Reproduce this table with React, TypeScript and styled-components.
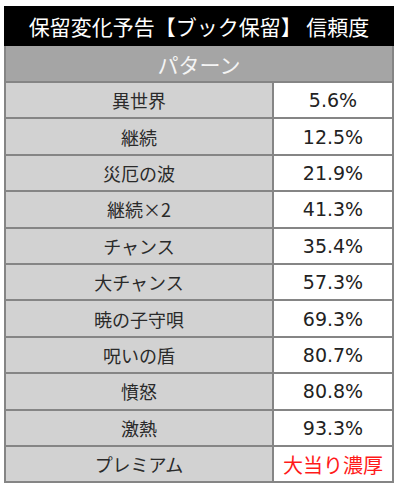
import React from "react";
import styled, { createGlobalStyle } from "styled-components";

const GlobalStyle = createGlobalStyle`
  html, body {
    margin: 0;
    padding: 0;
    background: #ffffff;
  }
`;

const Page = styled.div`
  padding: 6px 6px 0 4px;
`;

const Table = styled.table`
  width: 390px;
  border-collapse: collapse;
  border: 2px solid #858585;
  font-family: "Noto Sans CJK JP", sans-serif;
`;

const TitleCell = styled.th`
  height: 36px;
  padding: 0;
  background: #000000;
  color: #ffffff;
  font-size: 21px;
  font-weight: 400;
  text-align: center;
  border: 2px solid #000000;
`;

const PatternCell = styled.th`
  height: 35px;
  padding: 0;
  background: #a5a5a5;
  color: #f4f4f4;
  font-size: 21px;
  font-weight: 400;
  text-align: center;
  border: 2px solid #858585;
`;

const Row = styled.tr`
  height: 36.4px;
`;

const NameCell = styled.td`
  width: 266px;
  padding: 0;
  background: #d2d2d2;
  color: #2a2a2a;
  font-size: 18px;
  text-align: center;
  border: 2px solid #858585;
`;

const RateCell = styled.td<{ $hot?: boolean }>`
  padding: 0;
  background: #ffffff;
  color: ${(p) => (p.$hot ? "#ff1a1a" : "#222222")};
  font-family: ${(p) =>
    p.$hot ? '"Noto Sans CJK JP", sans-serif' : '"DejaVu Sans", sans-serif'};
  font-size: ${(p) => (p.$hot ? "20px" : "19px")};
  text-align: center;
  border: 2px solid #858585;
`;

const rows: { name: string; rate: string; hot?: boolean }[] = [
  { name: "異世界", rate: "5.6%" },
  { name: "継続", rate: "12.5%" },
  { name: "災厄の波", rate: "21.9%" },
  { name: "継続×2", rate: "41.3%" },
  { name: "チャンス", rate: "35.4%" },
  { name: "大チャンス", rate: "57.3%" },
  { name: "暁の子守唄", rate: "69.3%" },
  { name: "呪いの盾", rate: "80.7%" },
  { name: "憤怒", rate: "80.8%" },
  { name: "激熱", rate: "93.3%" },
  { name: "プレミアム", rate: "大当り濃厚", hot: true },
];

export default function App() {
  return (
    <Page>
      <GlobalStyle />
      <Table>
        <thead>
          <tr>
            <TitleCell colSpan={2}>保留変化予告【ブック保留】 信頼度</TitleCell>
          </tr>
          <tr>
            <PatternCell colSpan={2}>パターン</PatternCell>
          </tr>
        </thead>
        <tbody>
          {rows.map((r) => (
            <Row key={r.name}>
              <NameCell>{r.name}</NameCell>
              <RateCell $hot={r.hot}>{r.rate}</RateCell>
            </Row>
          ))}
        </tbody>
      </Table>
    </Page>
  );
}
